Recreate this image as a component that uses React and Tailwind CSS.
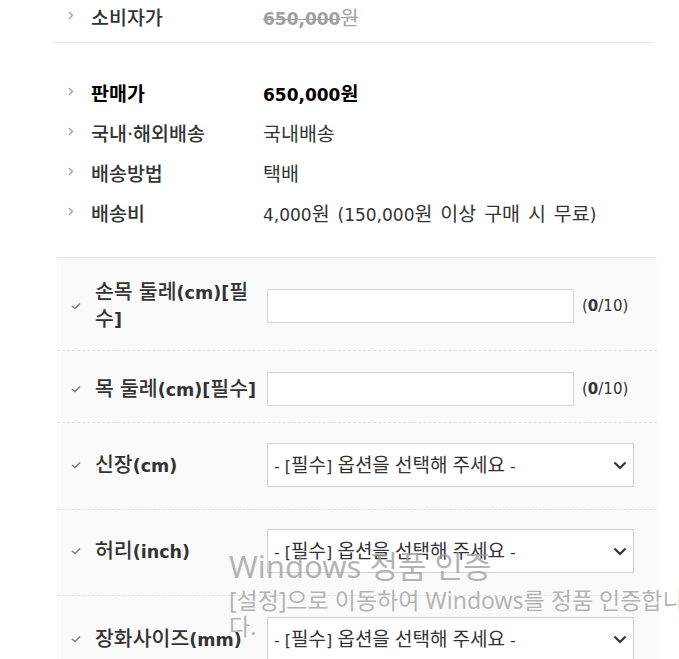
import React from 'react'

const FONT = { fontFamily: '"DejaVu Sans", "Noto Sans CJK KR", sans-serif' }

const INFO = [
  { label: '판매가', value: '650,000원', strong: true },
  { label: '국내·해외배송', value: '국내배송' },
  { label: '배송방법', value: '택배' },
  { label: '배송비', value: '4,000원 (150,000원 이상 구매 시 무료)' },
]

const OPTIONS = [
  { label: '손목 둘레(cm)[필수]', type: 'text', pad: 'pt-[21px] pb-[17px]' },
  { label: '목 둘레(cm)[필수]', type: 'text', pad: 'pt-[21px] pb-[16px]' },
  { label: '신장(cm)', type: 'select', pad: 'pt-[20px] pb-[22px]' },
  { label: '허리(inch)', type: 'select', pad: 'pt-[19px] pb-[22px]' },
  { label: '장화사이즈(mm)', type: 'select', pad: 'pt-[21px] pb-[22px]' },
]

// 한글은 맑은고딕보다 작게 나와서 따로 키움
function K({ text, k = 'text-[19.5px]' }) {
  return text.split(/([\uAC00-\uD7A3·]+)/).map((part, i) =>
    /[\uAC00-\uD7A3]/.test(part) ? <span key={i} className={k}>{part}</span> : part
  )
}

function Chevron() {
  return (
    <svg width="6" height="9" viewBox="0 0 6 9" className="mb-[7px] shrink-0">
      <polyline points="1,1 4.5,4.5 1,8" fill="none" stroke="#9a9a9a" strokeWidth="1.2" />
    </svg>
  )
}

function Check() {
  return (
    <svg width="10" height="8" viewBox="0 0 10 8" className="shrink-0">
      <polyline points="1,4 4,6.5 9,1.5" fill="none" stroke="#7a7a7a" strokeWidth="1.4" />
    </svg>
  )
}

function InfoRow({ label, children, strong }) {
  return (
    <div className="flex h-10 items-center">
      <div className="flex w-[210px] items-center pl-[15px]">
        <Chevron />
        <span className={'ml-[17px] ' + (strong ? 'font-bold text-black' : 'font-medium text-[#333]')}>
          <K text={label} />
        </span>
      </div>
      <div className={'[word-spacing:2.5px] ' + (strong ? 'font-bold text-black' : 'text-[#333]')}>
        <K text={children} />
      </div>
    </div>
  )
}

function OptionRow({ label, type, pad, last }) {
  return (
    <div className={'flex items-center pl-[14px] ' + pad + (last ? '' : ' border-b border-dashed border-[#e3e3e3]')}>
      <Check />
      <div className="ml-[14px] w-[172px] break-all text-[17.5px] leading-[26px] font-bold text-[#333]">
        <K text={label} k="text-[20.5px] font-medium" />
      </div>
      {type === 'text' ? (
        <div className="flex items-center">
          <input className="h-[34px] w-[307px] border border-[#d5d5d5] bg-white outline-none" />
          <span className="ml-[8px] text-[15px] text-[#333]">
            (<b>0</b>/10)
          </span>
        </div>
      ) : (
        <div className="flex h-[44px] w-[367px] items-center justify-between border border-[#d0d0d0] bg-white pl-[6px] pr-[6px] text-[16px] text-[#333]">
          <span>
            <K text="- [필수] 옵션을 선택해 주세요 -" k="text-[19px]" />
          </span>
          <svg width="14" height="9" viewBox="0 0 14 9" className="shrink-0">
            <polyline points="1.5,1.5 7,7 12.5,1.5" fill="none" stroke="#333" strokeWidth="2.2" />
          </svg>
        </div>
      )}
    </div>
  )
}

export default function App() {
  return (
    <div className="relative h-[659px] w-[679px] overflow-hidden bg-white text-[17px]" style={FONT}>
      {/* 소비자가 */}
      <div className="ml-[53px] w-[600px] h-[43px] border-b border-[#e5e5e5] pt-[1px]">
        <div className="flex h-9 items-center">
          <div className="flex w-[210px] items-center pl-[15px]">
            <Chevron />
            <span className="ml-[17px] font-medium text-[#333]">
              <K text="소비자가" />
            </span>
          </div>
          <div className="text-[#a0a0a0] line-through">
            <b>650,000</b>
            <span className="text-[19.5px]">원</span>
          </div>
        </div>
      </div>

      <div className="ml-[53px] w-[600px] pt-[32px]">
        {INFO.map(it => (
          <InfoRow key={it.label} label={it.label} strong={it.strong}>{it.value}</InfoRow>
        ))}
      </div>

      {/* 옵션 */}
      <div className="ml-[57px] mt-[22px] w-[600px] border-t border-[#e6e6e6] bg-[#fafafa]">
        {OPTIONS.map((o, i) => (
          <OptionRow key={o.label} {...o} last={i === OPTIONS.length - 1} />
        ))}
      </div>

      {/* 워터마크 */}
      <div
        className="pointer-events-none absolute left-[229px] top-[546px] whitespace-nowrap text-[#9c9c9c]/75"
        style={{ fontFamily: '"Noto Sans", "Noto Sans CJK KR", sans-serif' }}
      >
        <div className="text-[31px] leading-[41px]">Windows 정품 인증</div>
        <div className="text-[23px] leading-[26px]">
          [설정]으로 이동하여 Windows를 정품 인증합니
          <br />
          다.
        </div>
      </div>
    </div>
  )
}
